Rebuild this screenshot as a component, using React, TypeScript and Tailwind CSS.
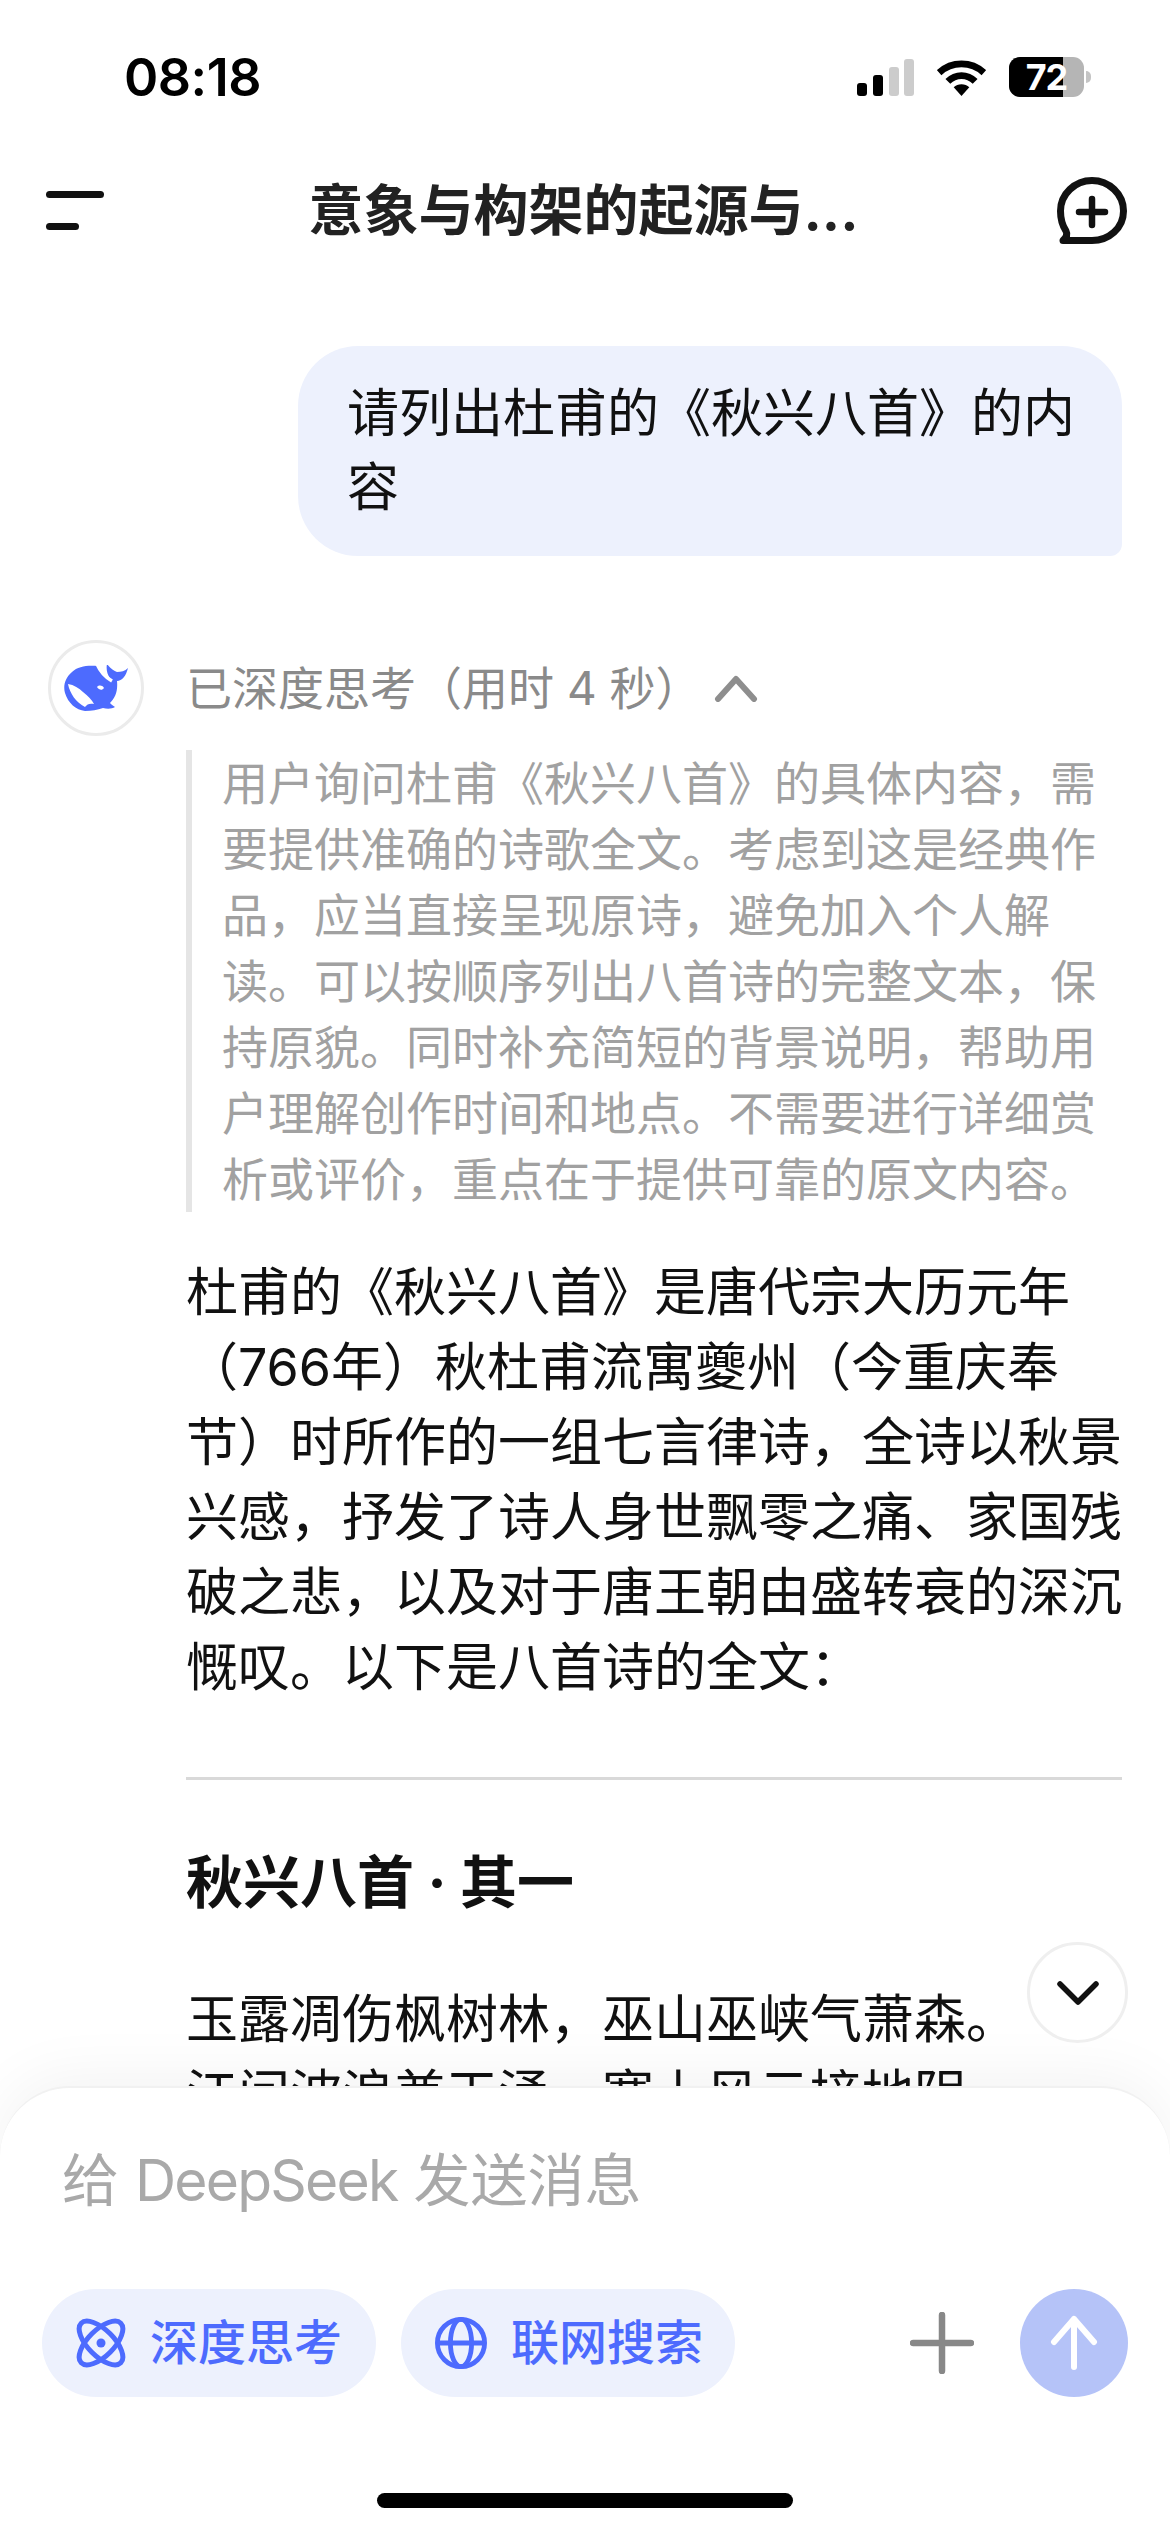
const cjk = "font-['Inter','Noto_Sans_CJK_SC',sans-serif]";

const thinkingLines = [
  '用户询问杜甫《秋兴八首》的具体内容，需',
  '要提供准确的诗歌全文。考虑到这是经典作',
  '品，应当直接呈现原诗，避免加入个人解',
  '读。可以按顺序列出八首诗的完整文本，保',
  '持原貌。同时补充简短的背景说明，帮助用',
  '户理解创作时间和地点。不需要进行详细赏',
  '析或评价，重点在于提供可靠的原文内容。',
];

const answerLines = [
  '杜甫的《秋兴八首》是唐代宗大历元年',
  '（766年）秋杜甫流寓夔州（今重庆奉',
  '节）时所作的一组七言律诗，全诗以秋景',
  '兴感，抒发了诗人身世飘零之痛、家国残',
  '破之悲，以及对于唐王朝由盛转衰的深沉',
  '慨叹。以下是八首诗的全文：',
];

function StatusBar() {
  return (
    <div className="flex h-[150px] shrink-0 items-start justify-between pl-[124px] pr-[79px] pt-[50px]">
      <span className="font-['Inter',sans-serif] text-[52px] font-semibold leading-[56px] tracking-[-0.5px] text-black">08:18</span>
      <div className="mt-[7px] flex items-center gap-[23px]">
        <svg width="57" height="37" viewBox="0 0 57 37">
          <rect x="0" y="24" width="10" height="13" rx="3" fill="#000" />
          <rect x="16" y="16" width="10" height="21" rx="3" fill="#000" />
          <rect x="32" y="8" width="10" height="29" rx="3" fill="#ccc" />
          <rect x="47" y="0" width="10" height="37" rx="3" fill="#ccc" />
        </svg>
        <svg width="49" height="37" viewBox="0 0 50 38">
          <path d="M2 14 C15 2 35 2 48 14" fill="none" stroke="#000" strokeWidth="7" />
          <path d="M11 23 C19 15 31 15 39 23" fill="none" stroke="#000" strokeWidth="7" />
          <path d="M17 29 C21 25 29 25 33 29 L25 38 Z" fill="#000" />
        </svg>
        <div className="flex items-center">
          <div className="relative flex h-[40px] w-[75px] rounded-[11px] bg-[#b5b5b5]">
            <div className="h-full w-[54px] rounded-l-[11px] bg-black" />
            <span className="absolute inset-0 text-center font-['Inter',sans-serif] text-[36px] font-bold leading-[40px] tracking-[-1px] text-white">72</span>
          </div>
          <div className="ml-[2px] h-[12px] w-[5px] rounded-r-full bg-[#c4c4c4]" />
        </div>
      </div>
    </div>
  );
}

function Header() {
  return (
    <div className="flex h-[120px] shrink-0 items-center justify-between pl-[46px] pr-[43px]">
      <div className="flex w-[58px] flex-col gap-[25px]">
        <div className="h-[7px] w-[58px] rounded-full bg-[#111]" />
        <div className="h-[7px] w-[33px] rounded-full bg-[#111]" />
      </div>
      <span className="ml-[6px] text-[55px] font-bold leading-[60px] text-[#222]">意象与构架的起源与...</span>
      <svg width="70" height="67" viewBox="0 0 70 67" fill="none">
        <path d="M35 3.5 C52 3.5 66.5 17 66.5 34 C66.5 51 52 63.5 35 63.5 H6 C10 60 10.5 57 9 54 C5 48 3.5 42 3.5 34 C3.5 17 18 3.5 35 3.5 Z" stroke="#111" strokeWidth="7" strokeLinejoin="round" />
        <path d="M35 22 V48 M22 35 H48" stroke="#111" strokeWidth="6.5" strokeLinecap="round" />
      </svg>
    </div>
  );
}

function Whale() {
  return (
    <svg width="64" height="46" viewBox="0 0 64 46">
      <path d="M34 1 C24 0 14 1 8 7 C1 13 -1 21 1 28 C4 38 12 45 21 46 C28 46 33 45 39 43 C43 44 48 44 51 42 C49 41 47 39 46 38 C51 33 54 27 53 16 C58 16 62 11 64 3 C61 6 57 7 53 7 C50 6 46 3 43 -1 C42 4 43 9 46 13 C41 12 37 7 34 1 Z" fill="#4d6bfe" />
      <path d="M33 -1 C36 6 41 12 48 16" fill="none" stroke="#fff" strokeWidth="3.5" />
      <path d="M4 19 C10 20 15 23 19 27 C24 31 28 35 30 39 C26 38 23 39 21 42 C12 37 6 29 4 19 Z" fill="#fff" />
      <path d="M33 22 C35 20 38 20 40 23 C38 26 35 25 33 22 Z" fill="#fff" />
    </svg>
  );
}

function AtomIcon() {
  return (
    <svg width="50" height="50" viewBox="0 0 50 50" fill="none" stroke="#4d6bfe" strokeWidth="5">
      <ellipse cx="25" cy="25" rx="28" ry="13" transform="rotate(45 25 25)" />
      <ellipse cx="25" cy="25" rx="28" ry="13" transform="rotate(-45 25 25)" />
      <circle cx="25" cy="25" r="4.5" fill="#4d6bfe" stroke="none" />
    </svg>
  );
}

function GlobeIcon() {
  return (
    <svg width="52" height="52" viewBox="0 0 54 54" fill="none" stroke="#4d6bfe" strokeWidth="5">
      <circle cx="27" cy="27" r="24.5" />
      <ellipse cx="27" cy="27" rx="11" ry="24.5" />
      <path d="M3 27 H51" />
    </svg>
  );
}

function Chip({ icon, label }: { icon: React.ReactNode; label: string }) {
  return (
    <div className="flex h-[108px] w-[334px] items-center gap-[24px] rounded-full bg-[#edf1fd] pl-[34px]">
      {icon}
      <span className="text-[48px] font-medium leading-[60px] text-[#4d6bfe]">{label}</span>
    </div>
  );
}

function Composer() {
  return (
    <div className="absolute bottom-0 left-0 right-0 h-[446px] rounded-t-[70px] border-t-[2px] border-[#f1f1f1] bg-white shadow-[0_-10px_60px_rgba(0,0,0,0.05)]">
      <div className="pl-[62px] pt-[58px] text-[57px] leading-[70px] text-[#a9a9a9]">
        给 <span className="tracking-[-1.8px]">DeepSeek</span> 发送消息
      </div>
      <div className="mt-[73px] flex items-center pl-[42px] pr-[42px]">
        <div className="flex gap-[25px]">
          <Chip icon={<AtomIcon />} label="深度思考" />
          <Chip icon={<GlobeIcon />} label="联网搜索" />
        </div>
        <svg className="ml-auto mr-[46px]" width="64" height="62" viewBox="0 0 64 62">
          <path d="M32 3 V59 M3 31 H61" stroke="#888" strokeWidth="6.5" strokeLinecap="round" />
        </svg>
        <div className="flex h-[108px] w-[108px] items-center justify-center rounded-full bg-[#b5c3f8]">
          <svg width="50" height="56" viewBox="0 0 50 56" fill="none">
            <path d="M25 4 V52 M5 27 L25 4 L45 27" stroke="#fff" strokeWidth="6" strokeLinecap="round" strokeLinejoin="round" />
          </svg>
        </div>
      </div>
      <div className="absolute bottom-[24px] left-[377px] h-[15px] w-[416px] rounded-full bg-black" />
    </div>
  );
}

export default function App() {
  return (
    <div className={`relative flex h-[2532px] w-[1170px] flex-col overflow-hidden bg-white ${cjk}`}>
      <StatusBar />
      <Header />

      <div className="flex justify-end pr-[48px] pt-[76px]">
        <div className="w-[824px] rounded-[60px] rounded-br-[12px] bg-[#edf1fd] py-[31px] pl-[49px] pr-[40px] text-[52px] leading-[74px] text-[#111]">
          请列出杜甫的《秋兴八首》的内容
        </div>
      </div>

      <div className="flex pl-[48px] pr-[48px] pt-[84px]">
        <div className="flex h-[96px] w-[96px] shrink-0 items-center justify-center rounded-full border-[3px] border-[#ebebeb]">
          <Whale />
        </div>
        <div className="ml-[42px] flex-1">
          <div className="flex h-[96px] items-center text-[46px] text-[#8a8a8a]">
            <span>已深度思考（用时 4 秒）</span>
            <svg className="ml-[12px]" width="44" height="28" viewBox="0 0 44 28" fill="none">
              <path d="M4 25 L22 5 L40 25" stroke="#8e8e8e" strokeWidth="6" strokeLinecap="round" strokeLinejoin="round" />
            </svg>
          </div>
          <div className="mt-[14px] border-l-[6px] border-[#e5e5e5] pl-[30px] text-[46px] leading-[66px] text-[#a1a1a1]">
            {thinkingLines.map((line) => (
              <div key={line} className="whitespace-nowrap">{line}</div>
            ))}
          </div>
          <div className="mt-[43px] text-[52px] leading-[75px] text-[#111]">
            {answerLines.map((line) => (
              <div key={line} className="whitespace-nowrap">{line}</div>
            ))}
          </div>
          <div className="mt-[72px] h-[3px] bg-[#d9d9d9]" />
          <div className="mt-[66px] text-[57px] font-bold leading-[74px] text-[#111]">秋兴八首 · 其一</div>
          <div className="mt-[62px] text-[52px] leading-[75px] text-[#111]">
            <div className="whitespace-nowrap">玉露凋伤枫树林，巫山巫峡气萧森。</div>
            <div className="whitespace-nowrap">江间波浪兼天涌，塞上风云接地阴。</div>
          </div>
        </div>
      </div>

      <div className="absolute left-[1027px] top-[1942px] z-10 flex h-[101px] w-[101px] items-center justify-center rounded-full border-[3px] border-[#efefef] bg-white">
        <svg width="44" height="28" viewBox="0 0 44 28" fill="none">
          <path d="M4 5 L22 23 L40 5" stroke="#111" strokeWidth="5.5" strokeLinecap="round" strokeLinejoin="round" />
        </svg>
      </div>

      <Composer />
    </div>
  );
}
